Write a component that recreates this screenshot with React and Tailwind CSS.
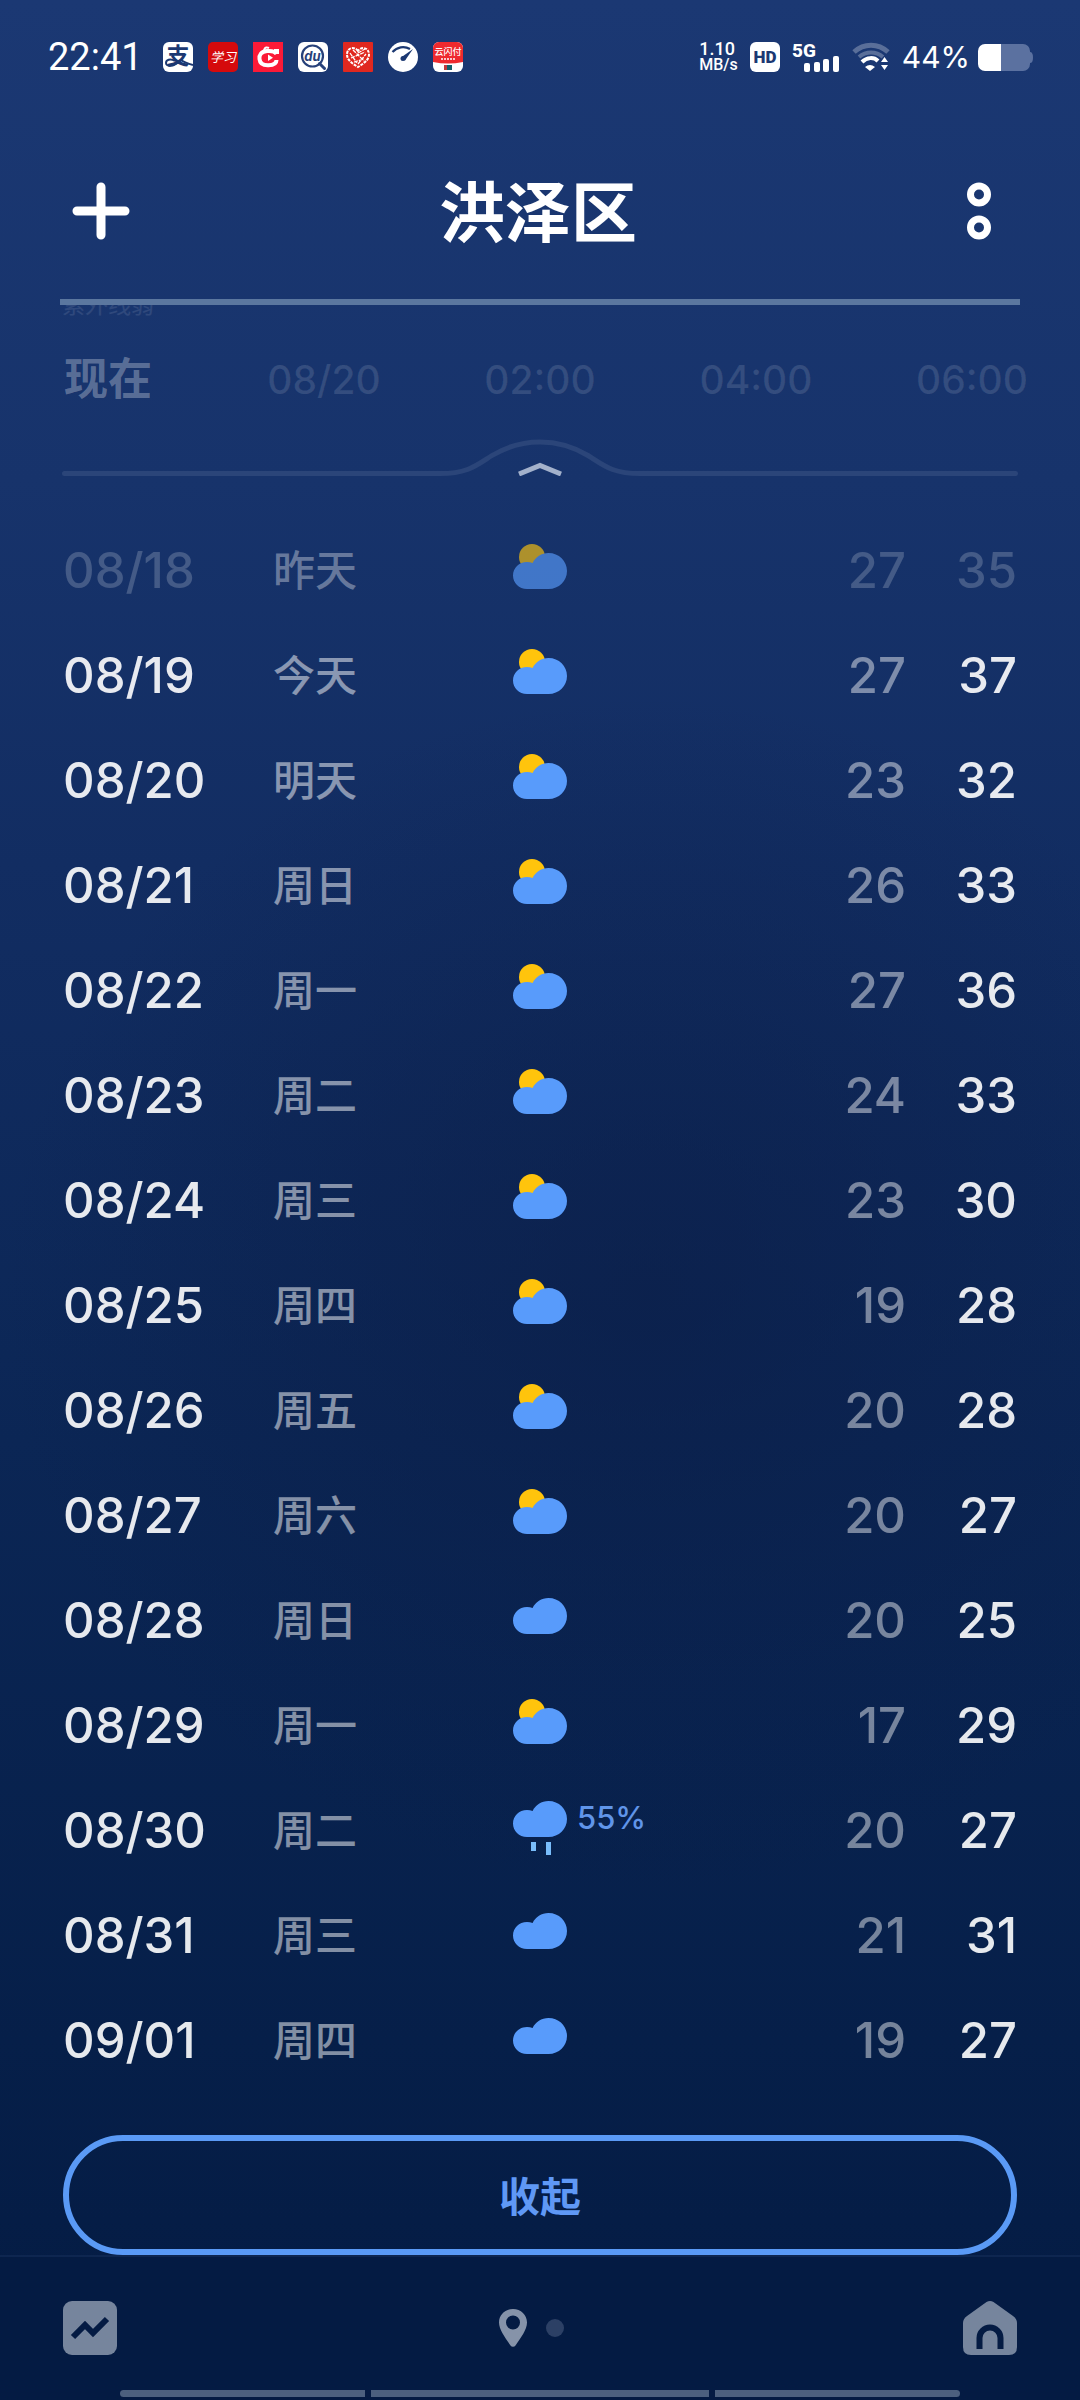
const hours = ["08/20", "02:00", "04:00", "06:00"];

const days = [
  { date: "08/18", day: "昨天", icon: "partly", low: 27, high: 35, past: true },
  { date: "08/19", day: "今天", icon: "partly", low: 27, high: 37 },
  { date: "08/20", day: "明天", icon: "partly", low: 23, high: 32 },
  { date: "08/21", day: "周日", icon: "partly", low: 26, high: 33 },
  { date: "08/22", day: "周一", icon: "partly", low: 27, high: 36 },
  { date: "08/23", day: "周二", icon: "partly", low: 24, high: 33 },
  { date: "08/24", day: "周三", icon: "partly", low: 23, high: 30 },
  { date: "08/25", day: "周四", icon: "partly", low: 19, high: 28 },
  { date: "08/26", day: "周五", icon: "partly", low: 20, high: 28 },
  { date: "08/27", day: "周六", icon: "partly", low: 20, high: 27 },
  { date: "08/28", day: "周日", icon: "cloudy", low: 20, high: 25 },
  { date: "08/29", day: "周一", icon: "partly", low: 17, high: 29 },
  { date: "08/30", day: "周二", icon: "rain", low: 20, high: 27, chance: "55%" },
  { date: "08/31", day: "周三", icon: "cloudy", low: 21, high: 31 },
  { date: "09/01", day: "周四", icon: "cloudy", low: 19, high: 27 },
];

// 云朵顶部在不同天气下的纵向位置
const cloudTop = { partly: 12, cloudy: 7, rain: 0 };

function WeatherIcon({ type }) {
  return (
    <svg className="h-[60px] w-[54px] shrink-0" viewBox="0 0 54 60" aria-hidden="true">
      {type === "partly" && <circle cx="19" cy="16" r="13" fill="#ffc40c" />}
      <g transform={`translate(0 ${cloudTop[type]})`} fill="#589bfb">
        <path d="M14 9c2 0 4 .4 5.600 1C22.500 4 28.500 0 35.500 0 46 0 54 8 54 18s-8 18-18.500 18H14C6 36 0 30 0 22.500S6 9 14 9z" />
      </g>
      {type === "rain" && (
        <g fill="#79bdfb">
          <rect x="18" y="41" width="5" height="9" />
          <rect x="33" y="41" width="5" height="13" />
        </g>
      )}
    </svg>
  );
}

function AppIcons() {
  return (
    <div className="flex gap-[15px]">
      <svg className="size-[30px]" viewBox="0 0 30 30">
        <rect width="30" height="30" rx="6" fill="#fff" />
        <text x="15" y="22" textAnchor="middle" fontSize="23" fontWeight="700" fill="#1b3872">支</text>
        <path d="M12 19c-5-3-9-1-9 2 0 4 8 4 12-1M18 18c4 3 8 4 12 5" fill="none" stroke="#1b3872" strokeWidth="2" />
      </svg>
      <svg className="size-[30px]" viewBox="0 0 30 30">
        <rect width="30" height="30" rx="5" fill="#d50a0c" />
        <text x="15" y="20" textAnchor="middle" fontSize="13" fontStyle="italic" fill="#fff">学习</text>
      </svg>
      <svg className="size-[30px]" viewBox="0 0 30 30">
        <rect width="30" height="30" fill="#fb1a37" />
        <path d="M24 12V9h-3M23.500 12C22 9.500 19 8.500 14 9c-6 .5-8 4-7.500 8 .5 5 4 6.500 9 6.300 5-.2 8-1.800 8-5.300" fill="none" stroke="#fff" strokeWidth="4" />
        <path d="M11 8c1-3 3-3 5-2" fill="none" stroke="#fff" strokeWidth="2" />
        <path d="M15 12.500l5 3.300-5 3.300z" fill="#fff" />
      </svg>
      <svg className="size-[30px]" viewBox="0 0 30 30">
        <rect width="30" height="30" rx="6" fill="#fff" />
        <circle cx="14.500" cy="14" r="10.500" fill="none" stroke="#27417a" strokeWidth="2.200" />
        <path d="M21.500 21.500l5 5" stroke="#27417a" strokeWidth="3" strokeLinecap="round" />
        <text x="14.500" y="19" textAnchor="middle" fontSize="13" fontWeight="700" fontStyle="italic" fill="#27417a">du</text>
      </svg>
      <svg className="size-[30px]" viewBox="0 0 30 30">
        <rect width="30" height="30" rx="1" fill="#e0281f" />
        <path d="M15 9C12 4.500 4.500 5 4 12c-.3 6 6 10 11 13 5-3 11.300-7 11-13C25.500 5 18 4.500 15 9z" fill="none" stroke="#fff" strokeWidth="2" strokeDasharray="3 1" />
        <path d="M7 11l7 10M10 8l11 11M15 11l7-4M8 16l14-6M15 22l8-10M11 20l10-3" stroke="#fff" strokeWidth="1.300" strokeDasharray="4 1" />
      </svg>
      <svg className="size-[30px]" viewBox="0 0 30 30">
        <circle cx="15" cy="15" r="15" fill="#fff" />
        <path d="M4.500 10C9 5 16 3.500 22 7" fill="none" stroke="#1b3872" strokeWidth="2.200" />
        <path d="M25 7l-8 11.500-4-3z" fill="#1b3872" />
        <circle cx="15" cy="16.500" r="2.500" fill="#1b3872" />
      </svg>
      <svg className="size-[30px]" viewBox="0 0 30 30">
        <rect width="30" height="30" rx="6" fill="#fff" />
        <path d="M0 20V6a6 6 0 0 1 6-6h18a6 6 0 0 1 6 6v14q-15 3-30 0z" fill="#ee2a2e" />
        <text x="15" y="13" textAnchor="middle" fontSize="9" fontWeight="500" fill="#fff">云闪付</text>
        <path d="M8 17h14" stroke="#fff" strokeWidth="1.500" strokeDasharray="2 1" />
        <rect x="11" y="23" width="4" height="5" fill="#c13a3c" />
        <rect x="14" y="23" width="5" height="5" fill="#12606b" />
      </svg>
    </div>
  );
}

function StatusBar() {
  return (
    <div className="flex h-[114px] items-center justify-between pl-12 pr-[46px] text-white">
      <div className="flex items-center gap-5">
        <span className="font-[Roboto] text-[38px] leading-none">22:41</span>
        <AppIcons />
      </div>
      <div className="flex items-center">
        <div className="mr-3 font-[Roboto] text-[18px] font-medium leading-[16px]">
          <div>1.10</div>
          <div className="text-[16px]">MB/s</div>
        </div>
        <svg className="mr-3 size-[30px]" viewBox="0 0 30 30">
          <rect width="30" height="30" rx="6" fill="#fff" />
          <text x="15" y="21" textAnchor="middle" fontSize="17" fontWeight="900" fill="#1b3872" fontFamily="Roboto">HD</text>
        </svg>
        <svg className="mr-3 h-[30px] w-[48px] overflow-visible" viewBox="0 0 48 30" fill="#fff">
          <text x="0" y="15" fontSize="19" fontWeight="800" fontFamily="Roboto">5G</text>
          <rect x="12" y="21" width="6" height="9" rx="2" />
          <rect x="22" y="20" width="6" height="10" rx="2" />
          <rect x="31" y="17" width="6" height="13" rx="2" />
          <rect x="41" y="14" width="6" height="16" rx="2" />
        </svg>
        <svg className="mr-3 h-[30px] w-[38px]" viewBox="0 0 38 30">
          <path d="M2 10c10-9 24-9 34 0" fill="none" stroke="#fff" strokeOpacity=".28" strokeWidth="5" />
          <path d="M7 15c7-6 17-6 24 0" fill="none" stroke="#fff" strokeOpacity=".28" strokeWidth="4" />
          <path d="M10 20c5-5 12-5 16-1" fill="none" stroke="#fff" strokeWidth="4" />
          <path d="M13 25q5-4 10 0l-5 4zM29 20l3.500-5 3.500 5zM29 23l3.500 5 3.500-5z" fill="#fff" />
        </svg>
        <span className="mr-2 text-[30px] leading-none">44%</span>
        <svg className="h-[27px] w-[56px]" viewBox="0 0 56 27">
          <path d="M23 0h22a7 7 0 0 1 7 7v1q3 0 3 5.500T52 19v1a7 7 0 0 1-7 7H23z" fill="#5b71a0" />
          <path d="M7 0h16v27H7a7 7 0 0 1-7-7V7a7 7 0 0 1 7-7z" fill="#fff" />
        </svg>
      </div>
    </div>
  );
}

function Header() {
  return (
    <header className="mx-[60px] flex h-[191px] items-center justify-between border-b-6 border-[#5b779f] pl-3 pr-7 pt-2 text-white">
      <button type="button" aria-label="添加城市">
        <svg className="size-[58px]" viewBox="0 0 58 58" stroke="#fff" strokeWidth="9" strokeLinecap="round">
          <path d="M29 5v48M5 29h48" />
        </svg>
      </button>
      <h1 className="pl-3 pt-1 text-[66px] font-bold leading-none">洪泽区</h1>
      <button type="button" aria-label="更多" className="pl-8">
        <svg className="h-[58px] w-[26px]" viewBox="0 0 26 58" fill="none" stroke="#fff" strokeWidth="7">
          <circle cx="13" cy="12.500" r="8.500" />
          <circle cx="13" cy="45.500" r="8.500" />
        </svg>
      </button>
    </header>
  );
}

function HourStrip() {
  return (
    <section>
      {/* 上一块内容滚动到标题栏下方，仅露出底部 */}
      <div className="flex h-[14px] items-end overflow-hidden pl-[62px] text-[23px] leading-7 text-white/10">
        紫外线弱
      </div>
      <ul className="grid h-[120px] grid-cols-5 items-center text-center text-[39px] font-medium leading-none text-white/12">
        <li className="text-[44px] font-bold text-white/30">现在</li>
        {hours.map((h) => (
          <li key={h}>{h}</li>
        ))}
      </ul>
      <div className="flex items-end px-[62px]">
        <span className="h-[5px] flex-1 rounded-l-full bg-[#2b4579]" />
        <button type="button" aria-label="收起小时预报">
          <svg className="block h-[37px] w-[200px]" viewBox="0 0 200 37" fill="none">
            <path d="M0 34.500c28 0 36-8 52-18 30-18 66-18 96 0 16 10 24 18 52 18" stroke="#2b4579" strokeWidth="5" />
            <path d="M79 35l21-8.500L121 35" stroke="#a3b1cb" strokeWidth="5" />
          </svg>
        </button>
        <span className="h-[5px] flex-1 rounded-r-full bg-[#2b4579]" />
      </div>
    </section>
  );
}

function DayRow({ item }) {
  const { date, day, icon, low, high, chance, past } = item;
  return (
    <tr className="h-[105px]">
      <th scope="row" className={`p-0 text-left font-medium ${past ? "text-white/20" : "text-white/90"}`}>
        {date}
      </th>
      <td className={`p-0 text-[42px] font-medium ${past ? "text-white/35" : "text-white/50"}`}>{day}</td>
      <td className={`p-0 ${past ? "opacity-65" : ""}`}>
        <div className="flex items-start gap-[10px]">
          <WeatherIcon type={icon} />
          {chance && <span className="text-[31px] font-medium leading-[34px] text-[#6095e9]">{chance}</span>}
        </div>
      </td>
      <td className={`p-0 text-right font-medium ${past ? "text-white/20" : "text-white/45"}`}>{low}</td>
      <td className={`p-0 text-right font-medium ${past ? "text-white/20" : "text-white/90"}`}>{high}</td>
    </tr>
  );
}

function BottomBar() {
  return (
    <footer className="mt-auto border-t-2 border-[#0e2650] bg-[#041b43]">
      <nav className="flex h-[133px] items-center justify-between px-[63px] pt-[9px]">
        <button type="button" aria-label="趋势">
          <svg className="block size-[54px]" viewBox="0 0 54 54">
            <rect width="54" height="54" rx="9" fill="#76859d" />
            <path d="M10 36l12-12 8 8 14-14" fill="none" stroke="#041b43" strokeWidth="6" />
          </svg>
        </button>
        <div className="flex items-center gap-[19px] pr-[18px]">
          <svg className="h-[38px] w-[28px]" viewBox="0 0 28 38">
            <path fillRule="evenodd" d="M14 0c8 0 14 6 14 13.500 0 7-6 15-11.500 23a3 3 0 0 1-5 0C6 28.500 0 20.500 0 13.500 0 6 6 0 14 0zm0 6.500a7 7 0 1 0 0 14 7 7 0 0 0 0-14z" fill="#8693a9" />
          </svg>
          <span className="size-[18px] rounded-full bg-[#2c4065]" />
        </div>
        <button type="button" aria-label="首页">
          <svg className="block size-[54px]" viewBox="0 0 54 54">
            <path d="M23.500 1q3.500-2 7 0L50 15q4 3 4 7v24q0 8-8 8H8q-8 0-8-8V22q0-4 4-7z" fill="#76859d" />
            <path d="M16.500 48V37a10.500 10.500 0 0 1 21 0v11" fill="none" stroke="#041b43" strokeWidth="6" />
          </svg>
        </button>
      </nav>
      <div className="flex justify-center gap-[6px] px-[120px] pb-[3px]">
        <span className="h-[7px] flex-[245] rounded-l-full bg-[#4c607e]" />
        <span className="h-[7px] flex-[338] bg-[#4c607e]" />
        <span className="h-[7px] flex-[245] rounded-r-full bg-[#4c607e]" />
      </div>
    </footer>
  );
}

function App() {
  return (
    <div className="flex min-h-screen flex-col bg-[radial-gradient(ellipse_60%_25%_at_60%_54%,rgba(11,29,70,0.6),rgba(11,29,70,0)),linear-gradient(#1b3873,#17336b_20%,#122d62_36%,#0b2655_60%,#061f49_85%,#041b43)] font-[Inter,'Noto_Sans_CJK_SC',sans-serif]">
      <StatusBar />
      <Header />
      <main className="flex flex-col">
        <HourStrip />
        <div className="mt-[42px] px-[63px]">
          <table className="w-full table-fixed border-collapse text-[49px] leading-none">
            <colgroup>
              <col className="w-[210px]" />
              <col className="w-[240px]" />
              <col />
              <col className="w-[90px]" />
              <col className="w-[111px]" />
            </colgroup>
            <tbody>
              {days.map((d) => (
                <DayRow key={d.date} item={d} />
              ))}
            </tbody>
          </table>
          <button
            type="button"
            className="mt-[42px] h-[120px] w-full rounded-full border-6 border-[#5a9af6] pt-1 text-[41px] font-bold leading-none text-[#5f98f5]"
          >
            收起
          </button>
        </div>
      </main>
      <BottomBar />
    </div>
  );
}

export default App;
